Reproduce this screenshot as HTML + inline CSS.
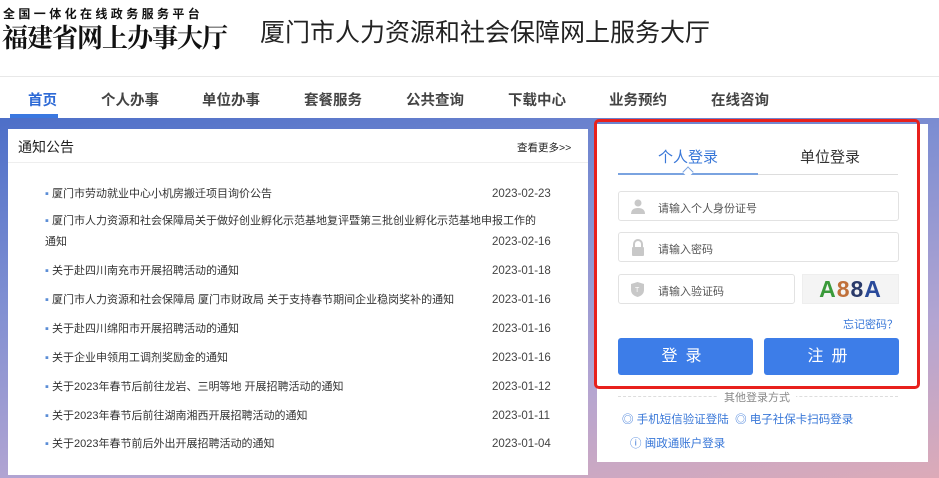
<!DOCTYPE html>
<html><head><meta charset="utf-8"><style>
*{margin:0;padding:0;box-sizing:border-box}
body{width:939px;height:478px;overflow:hidden;background:#fff;font-family:"Liberation Sans","Noto Sans CJK SC",sans-serif;position:relative;color:#333}
.a{position:absolute;white-space:nowrap}
.bg{position:absolute;left:0;top:118px;width:939px;height:360px;background:linear-gradient(170deg,#4d6fc8 0%,#7f8fd2 35%,#b3a5d2 70%,#dcaab8 100%)}
.nav{font-size:14.5px;font-weight:bold;color:#444;top:89px}
.news{font-size:11px;color:#333}
.news .a{line-height:14px}
.news .d{position:absolute;left:447px;top:0;font-size:11.5px;color:#444}
.dot{color:#5b8dd6}
.inp{position:absolute;border:1px solid #e2e2e2;border-radius:3px;background:#fff;font-size:11px;color:#555}
.btn{position:absolute;top:338px;height:37px;width:135px;background:#3d7de8;border-radius:3px;color:#fff;font-size:16px;text-align:center;line-height:37px;letter-spacing:8px}
.lk{font-size:12px;color:#3a78d8}
</style></head><body>
<div class="a" style="left:3px;top:5px;font-size:12px;font-weight:bold;letter-spacing:3.4px;font-family:'Noto Sans CJK SC',sans-serif;color:#111">全国一体化在线政务服务平台</div>
<div class="a" style="left:2px;top:18px;font-size:26px;font-weight:bold;font-family:'Noto Serif CJK SC',serif;color:#111;letter-spacing:-1px">福建省网上办事大厅</div>
<div class="a" style="left:260px;top:13px;font-size:25px;color:#222">厦门市人力资源和社会保障网上服务大厅</div>
<div class="a" style="left:0;top:76px;width:939px;height:1px;background:#e8e8e8"></div>
<div class="a nav" style="left:28px;color:#2d6ad6">首页</div>
<div class="a nav" style="left:101px">个人办事</div>
<div class="a nav" style="left:202px">单位办事</div>
<div class="a nav" style="left:304px">套餐服务</div>
<div class="a nav" style="left:406px">公共查询</div>
<div class="a nav" style="left:508px">下载中心</div>
<div class="a nav" style="left:609px">业务预约</div>
<div class="a nav" style="left:711px">在线咨询</div>
<div class="bg"></div>
<div class="a" style="left:10px;top:114px;width:48px;height:4px;background:#3a78e0"></div>
<div class="a" style="left:8px;top:129px;width:580px;height:346px;background:#fff"></div>
<div class="a" style="left:8px;top:162px;width:580px;height:1px;background:#eee"></div>
<div class="a" style="left:18px;top:137px;font-size:14px;color:#222">通知公告</div>
<div class="a" style="left:517px;top:140px;font-size:10.5px;color:#222">查看更多&gt;&gt;</div>
<div class="news">
<div class="a" style="left:45px;top:187px;width:510px"><span class="dot">▪ </span>厦门市劳动就业中心小机房搬迁项目询价公告<span class="d">2023-02-23</span></div>
<div class="a" style="left:45px;top:214px;width:510px"><span class="dot">▪ </span>厦门市人力资源和社会保障局关于做好创业孵化示范基地复评暨第三批创业孵化示范基地申报工作的</div>
<div class="a" style="left:45px;top:235px;width:510px">通知<span class="d">2023-02-16</span></div>
<div class="a" style="left:45px;top:264px;width:510px"><span class="dot">▪ </span>关于赴四川南充市开展招聘活动的通知<span class="d">2023-01-18</span></div>
<div class="a" style="left:45px;top:293px;width:510px"><span class="dot">▪ </span>厦门市人力资源和社会保障局 厦门市财政局 关于支持春节期间企业稳岗奖补的通知<span class="d">2023-01-16</span></div>
<div class="a" style="left:45px;top:322px;width:510px"><span class="dot">▪ </span>关于赴四川绵阳市开展招聘活动的通知<span class="d">2023-01-16</span></div>
<div class="a" style="left:45px;top:351px;width:510px"><span class="dot">▪ </span>关于企业申领用工调剂奖励金的通知<span class="d">2023-01-16</span></div>
<div class="a" style="left:45px;top:380px;width:510px"><span class="dot">▪ </span>关于2023年春节后前往龙岩、三明等地 开展招聘活动的通知<span class="d">2023-01-12</span></div>
<div class="a" style="left:45px;top:409px;width:510px"><span class="dot">▪ </span>关于2023年春节后前往湖南湘西开展招聘活动的通知<span class="d">2023-01-11</span></div>
<div class="a" style="left:45px;top:437px;width:510px"><span class="dot">▪ </span>关于2023年春节前后外出开展招聘活动的通知<span class="d">2023-01-04</span></div>
</div>
<div class="a" style="left:597px;top:124px;width:331px;height:338px;background:#fff"></div>
<div class="a" style="left:594px;top:119px;width:326px;height:270px;border:3px solid #e8201c;border-radius:5px"></div>
<div class="a" style="left:658px;top:146px;font-size:15px;color:#3a78d8">个人登录</div>
<div class="a" style="left:800px;top:146px;font-size:15px;color:#333">单位登录</div>
<div class="a" style="left:618px;top:174px;width:280px;height:1px;background:#ddd"></div>
<div class="a" style="left:618px;top:173px;width:140px;height:2px;background:#7aa3e0"></div>
<div class="a" style="left:684px;top:168px;width:8px;height:8px;border-left:1px solid #7aa3e0;border-top:1px solid #7aa3e0;background:#fff;transform:rotate(45deg)"></div>
<div class="inp" style="left:618px;top:191px;width:281px;height:30px"><span class="a" style="left:39px;top:8px">请输入个人身份证号</span>
<svg class="a" style="left:12px;top:7px" width="14" height="15"><circle cx="7" cy="4" r="3.5" fill="#c8c8c8"/><path d="M0 15 Q0 9 7 9 Q14 9 14 15Z" fill="#c8c8c8"/></svg></div>
<div class="inp" style="left:618px;top:232px;width:281px;height:30px"><span class="a" style="left:39px;top:8px">请输入密码</span>
<svg class="a" style="left:12px;top:6px" width="14" height="17"><path d="M3 8V5a4 4 0 0 1 8 0v3" stroke="#c8c8c8" stroke-width="2" fill="none"/><rect x="1" y="8" width="12" height="9" rx="1" fill="#c8c8c8"/></svg></div>
<div class="inp" style="left:618px;top:274px;width:177px;height:30px"><span class="a" style="left:39px;top:8px">请输入验证码</span>
<svg class="a" style="left:12px;top:7px" width="13" height="15"><path d="M6.5 0L13 2V8Q13 13 6.5 15Q0 13 0 8V2Z" fill="#c8c8c8"/><text x="4" y="10" font-size="7" fill="#fff">T</text></svg></div>
<div class="a" style="left:802px;top:274px;width:97px;height:30px;background:#f4f4f4;border:1px solid #eee;font-size:23px;font-weight:bold;line-height:29px;text-align:center;letter-spacing:1px"><span style="color:#3a9a3a">A</span><span style="color:#c0703a">8</span><span style="color:#2a3a6a">8</span><span style="color:#2a4a9a">A</span></div>
<div class="a lk" style="left:843px;top:316px;font-size:11px">忘记密码？</div>
<div class="btn" style="left:618px">登录</div>
<div class="btn" style="left:764px">注册</div>
<div class="a" style="left:618px;top:396px;width:280px;height:1px;border-top:1px dashed #ddd"></div>
<div class="a" style="left:718px;top:389px;padding:0 6px;background:#fff;font-size:11px;color:#888">其他登录方式</div>
<div class="a lk" style="left:622px;top:411px;font-size:11.5px">◎ 手机短信验证登陆 &nbsp;◎ 电子社保卡扫码登录</div>
<div class="a lk" style="left:630px;top:435px;font-size:11.5px">ⓘ 闽政通账户登录</div>
</body></html>
